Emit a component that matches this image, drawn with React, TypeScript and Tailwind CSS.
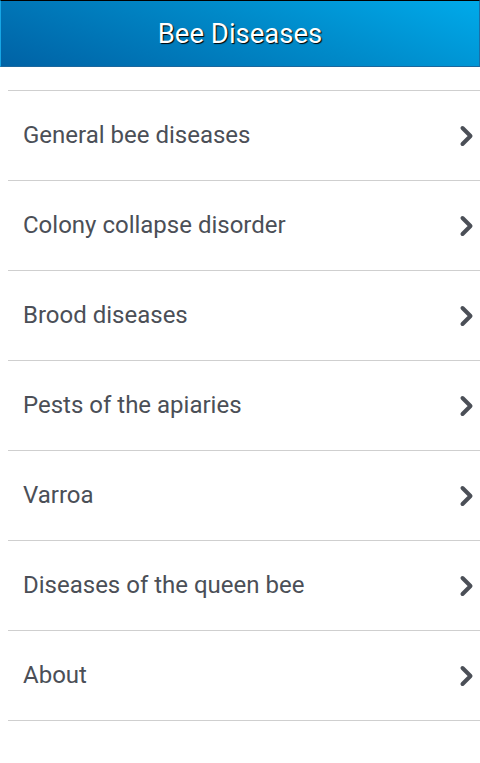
const items = [
  "General bee diseases",
  "Colony collapse disorder",
  "Brood diseases",
  "Pests of the apiaries",
  "Varroa",
  "Diseases of the queen bee",
  "About",
];

function Chevron() {
  return (
    <svg width="16" height="22" viewBox="0 0 16 22" className="shrink-0">
      <path
        d="M4.5 3 L12.5 11 L4.5 19"
        fill="none"
        stroke="#4b4f57"
        strokeWidth="4"
        strokeLinecap="round"
        strokeLinejoin="round"
      />
    </svg>
  );
}

export default function App() {
  return (
    <div className="min-h-[763px] w-[480px] bg-white font-['Roboto',sans-serif]">
      {/* Header */}
      <header className="flex h-[67px] items-center justify-center border-t border-t-black border-b border-b-[#1b679d] border-l border-l-[#16a6e6] border-r border-r-[#1c6ea6] bg-[linear-gradient(200deg,#00aaea_0%,#0089c8_45%,#0062a5_100%)]">
        <h1 className="text-[27.5px] leading-none text-white [text-shadow:1px_1px_1px_#000]">
          Bee Diseases
        </h1>
      </header>

      {/* Menu list */}
      <ul className="mt-[23px] ml-2 border-t border-[#cfcfcf]">
        {items.map((item) => (
          <li
            key={item}
            className="flex h-[90px] items-center justify-between border-b border-[#cfcfcf] pl-[15px] pr-[6px]"
          >
            <span className="text-[24px] text-[#4b4f57] -mt-[2px]">{item}</span>
            <Chevron />
          </li>
        ))}
      </ul>
    </div>
  );
}
